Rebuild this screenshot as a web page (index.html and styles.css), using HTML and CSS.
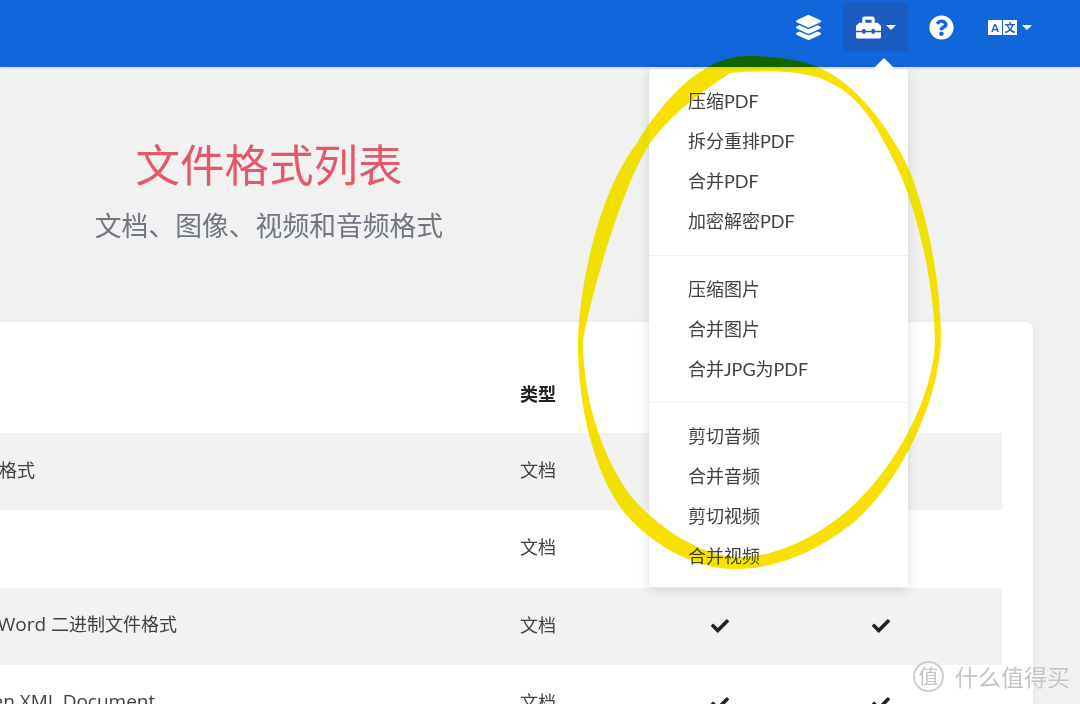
FILE: index.html
```html
<!DOCTYPE html>
<html lang="zh-CN">

<head>
    <meta charset="UTF-8">
    <title>文件格式列表</title>
    <link rel="stylesheet" href="styles.css">
</head>

<body>
    <nav class="navbar">
        <a class="nav-item nav-layers">
            <svg class="icon" viewBox="0 0 512 512"><path d="M12.41 148.02l232.94 105.67c6.8 3.09 14.49 3.09 21.29 0l232.94-105.67c16.55-7.51 16.55-32.52 0-40.03L266.65 2.31a25.607 25.607 0 0 0-21.29 0L12.41 107.98c-16.55 7.51-16.55 32.53 0 40.04zm487.18 88.28l-58.09-26.33-161.64 73.27c-7.56 3.43-15.59 5.17-23.86 5.17s-16.29-1.74-23.86-5.17L70.51 209.97l-58.1 26.33c-16.55 7.5-16.55 32.5 0 40l232.94 105.59c6.8 3.08 14.49 3.08 21.29 0L499.59 276.3c16.55-7.5 16.55-32.5 0-40zm0 127.8l-57.87-26.23-161.86 73.37c-7.56 3.43-15.59 5.17-23.86 5.17s-16.29-1.74-23.86-5.17L70.29 337.87 12.41 364.1c-16.55 7.5-16.55 32.5 0 40l232.94 105.59c6.8 3.08 14.49 3.08 21.29 0L499.59 404.1c16.55-7.5 16.55-32.5 0-40z"/></svg>
        </a>
        <div class="nav-tools">
            <a class="nav-item nav-active">
                <svg class="icon" viewBox="0 0 512 512"><path d="M502.63 214.63l-45.25-45.25c-6-6-14.14-9.37-22.63-9.37H384V80c0-26.51-21.49-48-48-48H176c-26.51 0-48 21.49-48 48v80H77.25c-8.49 0-16.62 3.37-22.63 9.37L9.37 214.63c-6 6-9.37 14.14-9.37 22.63V320h128v-16c0-8.84 7.16-16 16-16h32c8.84 0 16 7.16 16 16v16h128v-16c0-8.84 7.16-16 16-16h32c8.84 0 16 7.16 16 16v16h128v-82.75c0-8.48-3.37-16.62-9.37-22.62zM320 160H192V96h128v64zm64 208c0 8.84-7.16 16-16 16h-32c-8.84 0-16-7.16-16-16v-16H192v16c0 8.84-7.16 16-16 16h-32c-8.84 0-16-7.16-16-16v-16H0v96c0 17.67 14.33 32 32 32h448c17.67 0 32-14.33 32-32v-96H384v16z"/></svg>
                <span class="caret"></span>
            </a>
            <div class="dropdown">
                <span class="dropdown-arrow"></span>
                <div class="dropdown-group">
                    <a>压缩PDF</a>
                    <a>拆分重排PDF</a>
                    <a>合并PDF</a>
                    <a>加密解密PDF</a>
                </div>
                <div class="dropdown-group">
                    <a>压缩图片</a>
                    <a>合并图片</a>
                    <a>合并JPG为PDF</a>
                </div>
                <div class="dropdown-group">
                    <a>剪切音频</a>
                    <a>合并音频</a>
                    <a>剪切视频</a>
                    <a>合并视频</a>
                </div>
            </div>
        </div>
        <a class="nav-item nav-help">
            <svg class="icon" viewBox="0 0 512 512"><path d="M504 256c0 136.997-111.043 248-248 248S8 392.997 8 256C8 119.083 119.043 8 256 8s248 111.083 248 248zM262.655 90c-54.497 0-89.255 22.957-116.549 63.758-3.536 5.286-2.353 12.415 2.715 16.258l34.699 26.31c5.205 3.947 12.621 3.008 16.665-2.122 17.864-22.658 30.113-35.797 57.303-35.797 20.429 0 45.698 13.148 45.698 32.958 0 14.976-12.363 22.667-32.534 33.976C247.128 238.528 216 254.941 216 296v4c0 6.627 5.373 12 12 12h56c6.627 0 12-5.373 12-12v-1.333c0-28.462 83.186-29.647 83.186-106.667 0-58.002-60.165-102-116.531-102zM256 338c-25.365 0-46 20.635-46 46 0 25.364 20.635 46 46 46s46-20.636 46-46c0-25.365-20.635-46-46-46z"/></svg>
        </a>
        <a class="nav-item nav-lang">
            <span class="lang-icon"><span>A</span><span>文</span></span>
            <span class="caret"></span>
        </a>
    </nav>

    <header class="hero">
        <h1>文件格式列表</h1>
        <p>文档、图像、视频和音频格式</p>
    </header>

    <section class="card">
        <div class="table">
            <div class="row row-head">
                <div>格式</div>
                <div>类型</div>
                <div class="center"></div>
                <div class="center"></div>
            </div>
            <div class="row row-odd">
                <div>可移植文档格式</div>
                <div>文档</div>
                <div class="center"></div>
                <div class="center"></div>
            </div>
            <div class="row">
                <div><span class="en">DjVu</span></div>
                <div>文档</div>
                <div class="center"></div>
                <div class="center"></div>
            </div>
            <div class="row row-odd">
                <div><span class="en">Microsoft Word </span>二进制文件格式</div>
                <div>文档</div>
                <div class="center"><svg class="check" viewBox="0 0 512 512"><path d="M173.898 439.404l-166.4-166.4c-9.997-9.997-9.997-26.206 0-36.204l36.203-36.204c9.997-9.998 26.207-9.998 36.204 0L192 312.69 432.095 72.596c9.997-9.997 26.207-9.997 36.204 0l36.203 36.204c9.997 9.997 9.997 26.206 0 36.204l-294.4 294.401c-9.998 9.997-26.207 9.997-36.204-.001z"/></svg></div>
                <div class="center"><svg class="check" viewBox="0 0 512 512"><path d="M173.898 439.404l-166.4-166.4c-9.997-9.997-9.997-26.206 0-36.204l36.203-36.204c9.997-9.998 26.207-9.998 36.204 0L192 312.69 432.095 72.596c9.997-9.997 26.207-9.997 36.204 0l36.203 36.204c9.997 9.997 9.997 26.206 0 36.204l-294.4 294.401c-9.998 9.997-26.207 9.997-36.204-.001z"/></svg></div>
            </div>
            <div class="row">
                <div><span class="en">Office Open XML Document</span></div>
                <div>文档</div>
                <div class="center"><svg class="check" viewBox="0 0 512 512"><path d="M173.898 439.404l-166.4-166.4c-9.997-9.997-9.997-26.206 0-36.204l36.203-36.204c9.997-9.998 26.207-9.998 36.204 0L192 312.69 432.095 72.596c9.997-9.997 26.207-9.997 36.204 0l36.203 36.204c9.997 9.997 9.997 26.206 0 36.204l-294.4 294.401c-9.998 9.997-26.207 9.997-36.204-.001z"/></svg></div>
                <div class="center"><svg class="check" viewBox="0 0 512 512"><path d="M173.898 439.404l-166.4-166.4c-9.997-9.997-9.997-26.206 0-36.204l36.203-36.204c9.997-9.998 26.207-9.998 36.204 0L192 312.69 432.095 72.596c9.997-9.997 26.207-9.997 36.204 0l36.203 36.204c9.997 9.997 9.997 26.206 0 36.204l-294.4 294.401c-9.998 9.997-26.207 9.997-36.204-.001z"/></svg></div>
            </div>
        </div>
    </section>

    <!-- hand drawn marker ring on top of the page -->
    <svg class="marker" viewBox="0 0 1080 704">
        <path fill-rule="evenodd" d="M747 56C767 56 787 58 803 62C847 73 880 115 903 157C925 200 940 275 941 335C941 400 900 483 853 523C815 553 775 569 735 569C690 569 645 540 620 507C595 470 578 410 578 345C578 295 596 196 637 143C660 105 700 56 747 56Z M730 73C760 70 795 70 820 78C865 95 880 135 897 167C915 205 933 275 935 338C935 395 895 470 847 511C815 538 775 557 740 557C700 557 655 525 630 495C605 460 583 405 583 340C590 300 620 190 650 143C675 110 705 90 730 73Z"/>
    </svg>

    <div class="watermark">
        <span class="watermark-logo">值</span>
        <span>什么值得买</span>
    </div>
</body>

</html>
```

FILE: styles.css
```css
* {
    margin: 0;
    padding: 0;
    box-sizing: border-box;
}

html,
body {
    height: 704px;
    overflow: hidden;
}

body {
    position: relative;
    background-color: #f1f1f2;
    color: #404040;
    font-family: Lato, "Noto Sans CJK SC", sans-serif;
    font-size: 18px;
}

/* navbar */
.navbar {
    display: flex;
    justify-content: flex-end;
    align-items: flex-start;
    height: 67px;
    padding: 2px 47px 0 0;
    background-color: #1266dc;
    box-shadow: 0 1px 4px rgba(0, 0, 0, 0.12);
}

.nav-item {
    display: flex;
    align-items: center;
    justify-content: center;
    height: 50px;
    color: #fff;
}

.nav-layers {
    width: 66px;
    margin-right: 2px;
}

.nav-tools {
    position: relative;
    width: 65px;
}

.nav-active {
    gap: 5px;
    background-color: #1a5cc0;
    border-radius: 3px;
}

.nav-help {
    width: 66px;
}

.nav-lang {
    gap: 5px;
    width: 46px;
    margin-left: 13px;
}

.icon {
    display: block;
    width: 25px;
    height: 25px;
    fill: #fff;
}

.caret {
    width: 0;
    height: 0;
    border-left: 5px solid transparent;
    border-right: 5px solid transparent;
    border-top: 5px solid #fff;
}

.lang-icon {
    display: flex;
    gap: 1px;
}

.lang-icon span {
    width: 14px;
    height: 15px;
    background-color: #fff;
    color: #1a5cc0;
    font-size: 11px;
    font-weight: 700;
    line-height: 15px;
    text-align: center;
}

/* dropdown */
.dropdown {
    position: absolute;
    top: 67px;
    right: 0;
    width: 259px;
    background-color: #fff;
    border-radius: 3px;
    box-shadow: 0 3px 12px rgba(0, 0, 0, 0.14);
    z-index: 5;
}

.dropdown-arrow {
    position: absolute;
    top: -11px;
    right: 13px;
    border-left: 11px solid transparent;
    border-right: 11px solid transparent;
    border-bottom: 11px solid #fff;
}

.dropdown-group {
    padding: 13px 0 13px;
    border-bottom: 1px solid #efefef;
}

.dropdown-group:first-of-type {
    padding: 12px 0 14px;
}

.dropdown-group:last-child {
    padding: 13px 0 11px;
    border-bottom: none;
}

.dropdown-group a {
    display: block;
    height: 40px;
    padding-left: 39px;
    line-height: 40px;
}

/* title */
.hero {
    width: 538px;
    padding-top: 65px;
    height: 255px;
    text-align: center;
}

.hero h1 {
    color: #e4596a;
    font-size: 44.5px;
    font-weight: 400;
    line-height: 66px;
}

.hero p {
    color: #6f7680;
    font-size: 26.8px;
    line-height: 57px;
}

/* table card, runs off the left edge */
.card {
    width: 1171px;
    margin-left: -138px;
    padding: 31px;
    background-color: #fff;
    border-radius: 6px;
    box-shadow: 0 2px 8px rgba(0, 0, 0, 0.06);
}

.row {
    display: grid;
    grid-template-columns: 611px 136px 161px 161px 41px;
    align-items: center;
    height: 77.33px;
}

.row>div {
    padding: 0 16px 5px;
}

.row>.center {
    padding: 0 16px;
}

.en {
    font-family: "Open Sans", sans-serif;
    font-size: 19px;
}

.row-head {
    height: 80px;
    font-weight: 700;
    color: #222;
}

.row-head>div {
    padding-bottom: 0;
}

.row-odd {
    background-color: #f2f2f2;
}

.center {
    display: flex;
    justify-content: center;
    position: relative;
    left: -1px;
}

.check {
    display: block;
    width: 18px;
    height: 18px;
    fill: #222;
}

/* marker ring and site mark */
.marker {
    position: absolute;
    top: 0;
    left: 0;
    width: 1080px;
    height: 704px;
    fill: #f8e100;
    mix-blend-mode: darken;
    pointer-events: none;
    z-index: 10;
}

.watermark {
    position: absolute;
    right: 10px;
    bottom: 11px;
    display: flex;
    align-items: center;
    gap: 11px;
    color: #c4c4c4;
    font-size: 23px;
    text-shadow: 0 0 2px #fff;
    z-index: 10;
}

.watermark-logo {
    width: 31px;
    height: 31px;
    border: 2px solid #cfcfcf;
    border-radius: 50%;
    background-color: rgba(255, 255, 255, 0.6);
    font-size: 20px;
    line-height: 26px;
    text-align: center;
}
```
